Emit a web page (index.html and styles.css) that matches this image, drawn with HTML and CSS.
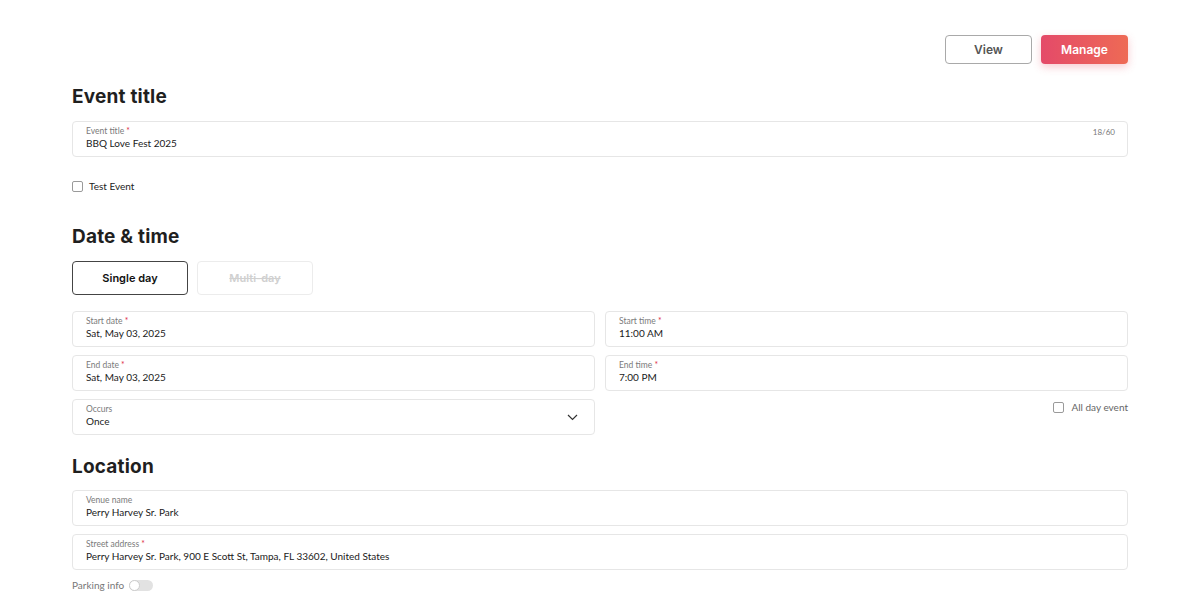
FILE: index.html
```html
<!DOCTYPE html>
<html lang="en">

<head>
    <meta charset="UTF-8">
    <meta name="viewport" content="width=device-width, initial-scale=1.0">
    <title>Edit event</title>
    <link rel="stylesheet" href="styles.css">
</head>

<body>
    <div class="page">
        <div class="topbar">
            <button class="btn btn-view">View</button>
            <button class="btn btn-manage">Manage</button>
        </div>

        <h2 class="section-title first">Event title</h2>
        <div class="field">
            <div class="label">Event title <span class="req">*</span></div>
            <div class="value">BBQ Love Fest 2025</div>
            <div class="counter">18/60</div>
        </div>
        <label class="check test-event"><span class="box"></span>Test Event</label>

        <h2 class="section-title">Date &amp; time</h2>
        <div class="daytabs">
            <button class="tab active">Single day</button>
            <button class="tab disabled">Multi-day</button>
        </div>
        <div class="grid">
            <div class="field">
                <div class="label">Start date <span class="req">*</span></div>
                <div class="value">Sat, May 03, 2025</div>
            </div>
            <div class="field">
                <div class="label">Start time <span class="req">*</span></div>
                <div class="value">11:00 AM</div>
            </div>
            <div class="field">
                <div class="label">End date <span class="req">*</span></div>
                <div class="value">Sat, May 03, 2025</div>
            </div>
            <div class="field">
                <div class="label">End time <span class="req">*</span></div>
                <div class="value">7:00 PM</div>
            </div>
            <div class="field select">
                <div class="label">Occurs</div>
                <div class="value">Once</div>
                <svg class="chevron" width="11" height="7" viewBox="0 0 11 7">
                    <path d="M1 1 L5.5 5.5 L10 1" fill="none" stroke="#333" stroke-width="1.2" />
                </svg>
            </div>
            <div class="allday">
                <label class="check"><span class="box"></span>All day event</label>
            </div>
        </div>

        <h2 class="section-title loc">Location</h2>
        <div class="stack">
            <div class="field">
                <div class="label">Venue name</div>
                <div class="value">Perry Harvey Sr. Park</div>
            </div>
            <div class="field">
                <div class="label">Street address <span class="req">*</span></div>
                <div class="value">Perry Harvey Sr. Park, 900 E Scott St, Tampa, FL 33602, United States</div>
            </div>
        </div>
        <div class="parking">
            <span>Parking info</span>
            <span class="switch"><span class="knob"></span></span>
        </div>
    </div>
</body>

</html>
```

FILE: styles.css
```css
* {
    box-sizing: border-box;
}

body {
    margin: 0;
    background: #fff;
    font-family: Lato, "Open Sans", sans-serif;
    color: #1f1f1f;
}

.page {
    margin: 0 72px;
    padding-top: 35px;
}

.topbar {
    display: flex;
    justify-content: flex-end;
    gap: 9px;
}

.btn {
    width: 87px;
    height: 29px;
    border-radius: 4px;
    font-family: Inter, sans-serif;
    font-size: 12px;
    font-weight: 600;
    cursor: pointer;
}

.btn-view {
    background: #fff;
    border: 1px solid #a9a9a9;
    color: #555;
}

.btn-manage {
    border: none;
    color: #fff;
    background: linear-gradient(90deg, #e44a69, #ee6a55);
    box-shadow: 0 3px 8px rgba(232, 80, 100, 0.3);
}

.section-title {
    font-family: Inter, sans-serif;
    font-weight: 700;
    font-size: 19px;
    letter-spacing: 0.2px;
    margin: 34px 0 13px;
    line-height: 22px;
}

.section-title.first {
    margin-top: 22px;
}

.section-title.loc {
    margin-top: 21px;
    margin-bottom: 12px;
}

.field {
    position: relative;
    height: 36px;
    border: 1px solid #e6e6e6;
    border-radius: 4px;
    padding: 4px 13px 0;
}

.label {
    font-size: 8.5px;
    color: #7a7a7a;
    line-height: 11px;
}

.req {
    color: #e0304a;
}

.value {
    font-size: 10px;
    line-height: 13px;
    color: #1a1a1a;
}

.counter {
    position: absolute;
    right: 12px;
    top: 5px;
    font-size: 8px;
    color: #777;
}

.check {
    display: flex;
    align-items: center;
    gap: 6px;
    font-size: 10px;
    color: #222;
}

.box {
    width: 11px;
    height: 11px;
    border: 1px solid #9a9a9a;
    border-radius: 2px;
}

.test-event {
    margin-top: 23px;
}

.daytabs {
    display: flex;
    gap: 9px;
    margin-bottom: 16px;
}

.tab {
    width: 116px;
    height: 34px;
    border-radius: 4px;
    background: #fff;
    font-family: Inter, sans-serif;
    font-size: 11px;
    font-weight: 600;
}

.tab.active {
    border: 1px solid #444;
    color: #111;
}

.tab.disabled {
    border: 1px solid #ececec;
    color: #d0d0d0;
    text-decoration: line-through;
}

.grid {
    display: grid;
    grid-template-columns: 1fr 1fr;
    column-gap: 10px;
    row-gap: 8px;
}

.select .chevron {
    position: absolute;
    right: 16px;
    top: 14px;
}

.allday {
    display: flex;
    justify-content: flex-end;
    align-items: flex-start;
    padding-top: 2px;
}

.allday .check {
    color: #666;
    gap: 7px;
}

.stack {
    display: flex;
    flex-direction: column;
    gap: 8px;
}

.parking {
    display: flex;
    align-items: center;
    gap: 5px;
    margin-top: 9px;
    font-size: 10px;
    color: #777;
}

.switch {
    position: relative;
    width: 24px;
    height: 11px;
    border-radius: 6px;
    background: #e2e2e2;
}

.knob {
    position: absolute;
    left: 0;
    top: 0;
    width: 11px;
    height: 11px;
    border-radius: 50%;
    background: #fff;
    border: 1px solid #ccc;
}
```
